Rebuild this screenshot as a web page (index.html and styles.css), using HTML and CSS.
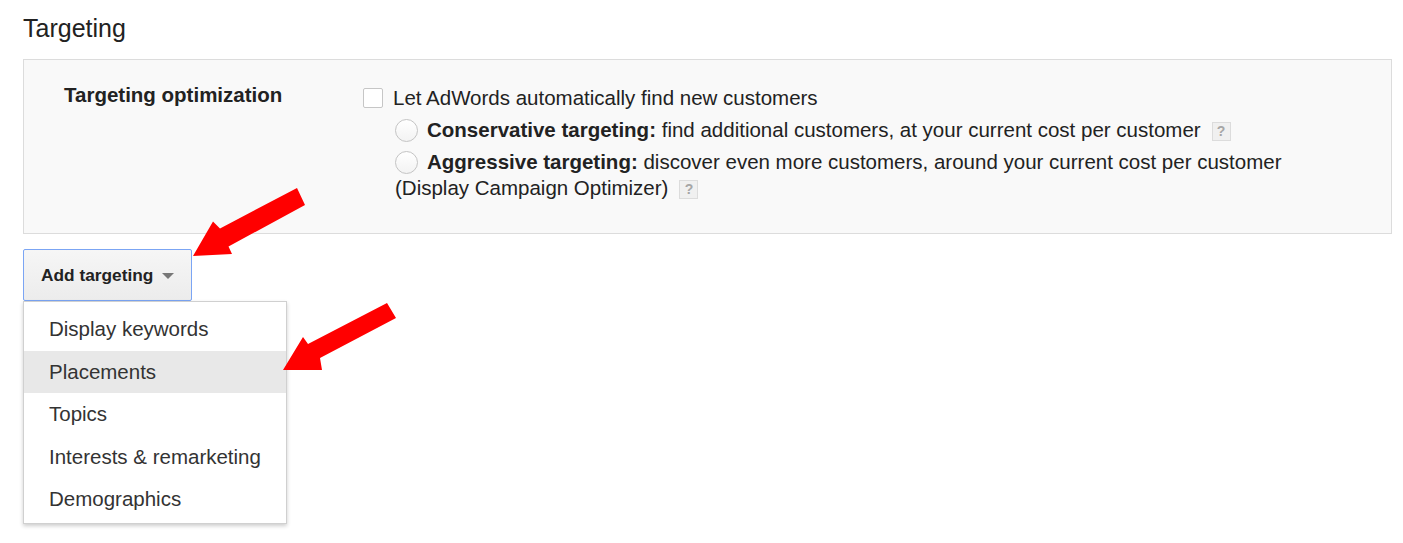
FILE: index.html
```html
<!DOCTYPE html>
<html>
<head>
<meta charset="utf-8">
<link rel="stylesheet" href="styles.css">
</head>
<body>
<div class="page">
  <h1 class="title">Targeting</h1>
  <div class="panel">
    <div class="panel-label">Targeting optimization</div>
    <div class="panel-body">
      <div class="check-row">
        <span class="checkbox"></span>
        <span>Let AdWords automatically find new customers</span>
      </div>
      <div class="option">
        <span class="radio"></span><b>Conservative targeting:</b> find additional customers, at your current cost per customer<span class="help">?</span>
      </div>
      <div class="option">
        <span class="radio"></span><b>Aggressive targeting:</b> discover even more customers, around your current cost per customer (Display Campaign Optimizer)<span class="help">?</span>
      </div>
    </div>
  </div>
  <div class="dropdown">
    <button class="add-btn">Add targeting<span class="caret"></span></button>
    <ul class="menu">
      <li class="menu-item">Display keywords</li>
      <li class="menu-item active">Placements</li>
      <li class="menu-item">Topics</li>
      <li class="menu-item">Interests &amp; remarketing</li>
      <li class="menu-item">Demographics</li>
    </ul>
  </div>
</div>
<svg class="arrows" width="1403" height="543" viewBox="0 0 1403 543">
  <polygon points="193,256 213,221.5 220,228.5 297,188 305,205 228.5,246.5 232,254" fill="#ff0000"/>
  <polygon points="283,370 303,337 308,344 387,303 396,318 320,358 322,370" fill="#ff0000"/>
</svg>
</body>
</html>
```

FILE: styles.css
```css
html, body {
  margin: 0;
  padding: 0;
  background: #ffffff;
}
body {
  font-family: "Liberation Sans", Arial, sans-serif;
  color: #222222;
  position: relative;
  width: 1403px;
  height: 543px;
  overflow: hidden;
}
.page {
  padding: 13px 11px 0 23px;
}
.title {
  margin: 0;
  font-size: 25px;
  font-weight: normal;
  line-height: 30px;
  color: #222;
}
.panel {
  margin-top: 16px;
  border: 1px solid #dcdcdc;
  background: #f9f9f9;
  display: grid;
  grid-template-columns: 299px 1fr;
  padding: 23px 60px 32px 40px;
  font-size: 20.5px;
  line-height: 26px;
}
.panel-label {
  font-weight: bold;
  line-height: 24px;
}
.check-row {
  display: flex;
  align-items: center;
  gap: 10px;
  margin-top: 2px;
}
.checkbox {
  width: 18px;
  height: 18px;
  border: 1px solid #c6c6c6;
  border-radius: 2px;
  background: #fff;
  flex: none;
}
.option {
  margin-left: 32px;
  margin-top: 6px;
}
.radio {
  display: inline-block;
  width: 21px;
  height: 21px;
  border: 1px solid #c4c4c4;
  border-radius: 50%;
  background: linear-gradient(#ffffff, #f3f3f3);
  vertical-align: -5px;
  margin-right: 9px;
}
.help {
  display: inline-block;
  width: 17px;
  height: 17px;
  border: 1px solid #dcdcdc;
  background: #f0f0f0;
  color: #a6a6a6;
  font-size: 14px;
  font-weight: bold;
  line-height: 17px;
  text-align: center;
  margin-left: 11px;
  vertical-align: 1px;
}
.dropdown {
  position: relative;
  margin-top: 15px;
  width: 169px;
}
.add-btn {
  display: flex;
  align-items: center;
  width: 169px;
  height: 52px;
  padding: 0 0 0 17px;
  border: 1px solid #7ba5f4;
  border-radius: 2px;
  background: linear-gradient(#f6f6f6, #ececec);
  font-family: "Liberation Sans", Arial, sans-serif;
  font-size: 17.3px;
  font-weight: bold;
  color: #222;
  cursor: pointer;
}
.caret {
  width: 0;
  height: 0;
  border-left: 6px solid transparent;
  border-right: 6px solid transparent;
  border-top: 6px solid #777;
  margin-left: 9px;
  margin-top: 1px;
}
.menu {
  position: absolute;
  top: 52px;
  left: 0;
  width: 262px;
  margin: 0;
  padding: 6px 0 2px;
  list-style: none;
  background: #fff;
  border: 1px solid #d0d0d0;
  box-shadow: 0 2px 4px rgba(0, 0, 0, 0.2);
}
.menu-item {
  height: 42.5px;
  line-height: 42.5px;
  padding-left: 25px;
  font-size: 20.5px;
  color: #333;
}
.menu-item.active {
  background: #e8e8e8;
}
.arrows {
  position: absolute;
  top: 0;
  left: 0;
  pointer-events: none;
}
```
